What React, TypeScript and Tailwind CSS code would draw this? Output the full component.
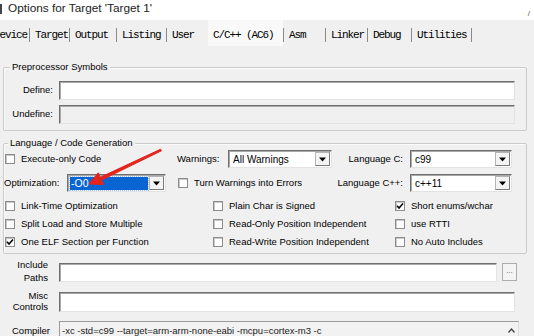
import React from "react";

const sunken =
  "border border-t-[#6f6f6f] border-l-[#6f6f6f] border-r-[#e3e3e3] border-b-[#e3e3e3] shadow-[inset_1px_1px_0_#a9a9a9]";

function Input({ className = "", disabled = false }: { className?: string; disabled?: boolean }) {
  return <div className={`${sunken} ${disabled ? "bg-[#f0f0f0]" : "bg-white"} ${className}`} />;
}

function DropBtn() {
  return (
    <div className="w-[15px] h-full flex items-center justify-center bg-[#f4f4f4] border border-[#b5b5b5] border-r-[#7a7a7a] border-b-[#7a7a7a]">
      <svg width="7" height="5" viewBox="0 0 7 5">
        <path d="M0 0.5 H7 L3.5 4.5 Z" fill="#000" />
      </svg>
    </div>
  );
}

function Combo({ width, value, selected = false }: { width: string; value: string; selected?: boolean }) {
  return (
    <div className={`${sunken} ${width} h-[18px] bg-white flex items-stretch p-[1px]`}>
      <div className="flex-1 flex items-center px-[1px]">
        {selected ? (
          <span className="w-full h-[13px] bg-[#0a64d2] text-white text-[10.5px] leading-[13px] pl-[1px] outline outline-1 outline-dotted outline-[#9cc3f5]">
            {value}
          </span>
        ) : (
          <span className="pl-[2px] text-[10px]">{value}</span>
        )}
      </div>
      <DropBtn />
    </div>
  );
}

function Check({ checked = false }: { checked?: boolean }) {
  return (
    <span className="w-[10px] h-[10px] shrink-0 bg-white border border-[#8c8c8c] shadow-[inset_1px_1px_0_#c8c8c8] flex items-center justify-center">
      {checked && (
        <svg width="8" height="8" viewBox="0 0 8 8">
          <path d="M1 3.8 L3 6 L7 1.5" stroke="#000" strokeWidth="1.6" fill="none" />
        </svg>
      )}
    </span>
  );
}

function CheckLabel({ label, checked = false }: { label: string; checked?: boolean }) {
  return (
    <div className="flex items-center gap-[6px]">
      <Check checked={checked} />
      <span>{label}</span>
    </div>
  );
}

const tabs: { label: string; w: string; sep: boolean; active?: boolean }[] = [
  { label: "Device", w: "w-[40px]", sep: true },
  { label: "Target", w: "w-[39px]", sep: true },
  { label: "Output", w: "w-[46px]", sep: true },
  { label: "Listing", w: "w-[49px]", sep: true },
  { label: "User", w: "w-[40px]", sep: false },
  { label: "C/C++ (AC6)", w: "w-[75px]", sep: true, active: true },
  { label: "Asm", w: "w-[41px]", sep: true },
  { label: "Linker", w: "w-[41px]", sep: true },
  { label: "Debug", w: "w-[43px]", sep: true },
  { label: "Utilities", w: "w-[59px]", sep: true },
];

export default function App() {
  return (
    <div className="relative w-[534px] h-[336px] overflow-hidden bg-[#f0f0f0] text-black font-['Liberation_Sans',Arial,sans-serif] text-[9.5px]">
      {/* title bar */}
      <div className="h-[20px] bg-white flex items-center">
        <span className="w-[2px] h-[10px] bg-[#444] mb-[3px]" />
        <span className="ml-[6px] mb-[3px] text-[11.8px] text-[#222]">Options for Target 'Target 1'</span>
        <span className="ml-auto mr-[4px] mt-[8px] text-[8px] text-[#555]">/</span>
      </div>

      {/* tabs */}
      <div className="h-[26px] flex ml-[-11px] font-['Liberation_Mono',monospace] text-[11px] tracking-[-1.1px]">
        {tabs.map((t) => (
          <React.Fragment key={t.label}>
            <div className={`${t.w} h-full flex items-center pt-[4px] pl-[5px] whitespace-pre ${t.active ? "bg-[#f9f9f9]" : ""}`}>
              {t.label}
            </div>
            {t.sep ? <div className="w-px h-[14px] self-center mt-[4px] bg-[#8a8a8a]" /> : <div className="w-px" />}
          </React.Fragment>
        ))}
      </div>

      {/* Preprocessor Symbols */}
      <div className="relative mt-[21px] ml-[3px] w-[524px] border border-[#cbcbcb] rounded-[2px] shadow-[inset_1px_1px_0_#fbfbfb] pt-[13px] pb-[6px] pr-[11px] flex flex-col gap-[5px]">
        <span className="absolute -top-[7px] left-[6px] px-[2px] bg-[#f0f0f0] leading-[12px]">Preprocessor Symbols</span>
        <div className="flex items-center h-[19px]">
          <span className="w-[49px] text-right">Define:</span>
          <Input className="ml-[6px] flex-1 h-[19px]" />
        </div>
        <div className="flex items-center h-[19px]">
          <span className="w-[49px] text-right">Undefine:</span>
          <Input className="ml-[6px] flex-1 h-[19px]" disabled />
        </div>
      </div>

      {/* Language / Code Generation */}
      <div className="relative mt-[12px] ml-[3px] w-[524px] border border-[#cbcbcb] rounded-[2px] shadow-[inset_1px_1px_0_#fbfbfb] pt-[6px] pb-[2px] pr-[14px]">
        <span className="absolute -top-[7px] left-[4px] px-[2px] bg-[#f0f0f0] leading-[12px]">Language / Code Generation</span>

        <div className="flex items-center h-[18px]">
          <div className="w-[173px] pl-[1px]">
            <CheckLabel label="Execute-only Code" />
          </div>
          <span className="w-[51px]">Warnings:</span>
          <Combo width="w-[104px]" value="All Warnings" />
          <div className="flex-1 flex items-center justify-end gap-[7px]">
            <span>Language C:</span>
            <Combo width="w-[102px]" value="c99" />
          </div>
        </div>

        <div className="flex items-center h-[20px] mt-[5px]">
          <div className="w-[173px] flex items-center">
            <span className="w-[63px]">Optimization:</span>
            <Combo width="w-[99px]" value="-O0" selected />
          </div>
          <div className="pl-[1px]">
            <CheckLabel label="Turn Warnings into Errors" />
          </div>
          <div className="flex-1 flex items-center justify-end gap-[7px]">
            <span>Language C++:</span>
            <Combo width="w-[102px]" value="c++11" />
          </div>
        </div>

        <div className="mt-[4px] flex flex-col">
          {[
            ["Link-Time Optimization", false, "Plain Char is Signed", false, "Short enums/wchar", true],
            ["Split Load and Store Multiple", false, "Read-Only Position Independent", false, "use RTTI", false],
            ["One ELF Section per Function", true, "Read-Write Position Independent", false, "No Auto Includes", false],
          ].map((r) => (
            <div key={r[0] as string} className="flex items-center h-[18px]">
              <div className="w-[209px] pl-[1px]">
                <CheckLabel label={r[0] as string} checked={r[1] as boolean} />
              </div>
              <div className="w-[182px]">
                <CheckLabel label={r[2] as string} checked={r[3] as boolean} />
              </div>
              <CheckLabel label={r[4] as string} checked={r[5] as boolean} />
            </div>
          ))}
        </div>
      </div>

      {/* Include / Misc / Compiler */}
      <div className="flex mt-[4px] h-[29px]">
        <div className="w-[48px] text-right leading-[13px]">
          <div>Include</div>
          <div>Paths</div>
        </div>
        <Input className="ml-[11px] mt-[5px] w-[438px] h-[19px]" />
        <div className="ml-[5px] mt-[5px] w-[15px] h-[18px] bg-[#f4f4f4] border border-[#adadad] flex items-center justify-center text-[8px] text-[#555] leading-none pb-[2px]">
          ...
        </div>
      </div>

      <div className="flex h-[25px]">
        <div className="w-[48px] text-right leading-[11px] pt-[3px]">
          <div>Misc</div>
          <div>Controls</div>
        </div>
        <Input className="ml-[11px] mt-[5px] w-[456px] h-[20px]" />
      </div>

      <div className="flex mt-[9px]">
        <span className="w-[50px] text-right pt-[3px] leading-[13px]">Compiler</span>
        <div className="ml-[9px] w-[460px] h-[24px] border border-[#9a9a9a] border-r-[#dcdcdc] border-b-[#dcdcdc] bg-[#f2f2f2] flex">
          <span className="flex-1 pl-[2px] pt-[2px] leading-[13px] text-[#222]">
            -xc -std=c99 --target=arm-arm-none-eabi -mcpu=cortex-m3 -c
          </span>
          <span className="w-[14px] pt-[6px] flex justify-center">
            <svg width="7" height="5" viewBox="0 0 7 5">
              <path d="M0.5 4.5 L3.5 1 L6.5 4.5" stroke="#444" strokeWidth="1.3" fill="none" />
            </svg>
          </span>
        </div>
      </div>

      {/* red annotation arrow */}
      <svg className="absolute top-0 left-0 pointer-events-none" width="534" height="336" viewBox="0 0 534 336">
        <polygon
          points="160.6,149.2 100.2,177.3 98.3,172.8 89,184 103.5,184.4 101.4,180.1 161.4,150.8"
          fill="#e5231d"
          stroke="#e5231d"
          strokeWidth="1"
          strokeLinejoin="round"
        />
      </svg>
    </div>
  );
}
